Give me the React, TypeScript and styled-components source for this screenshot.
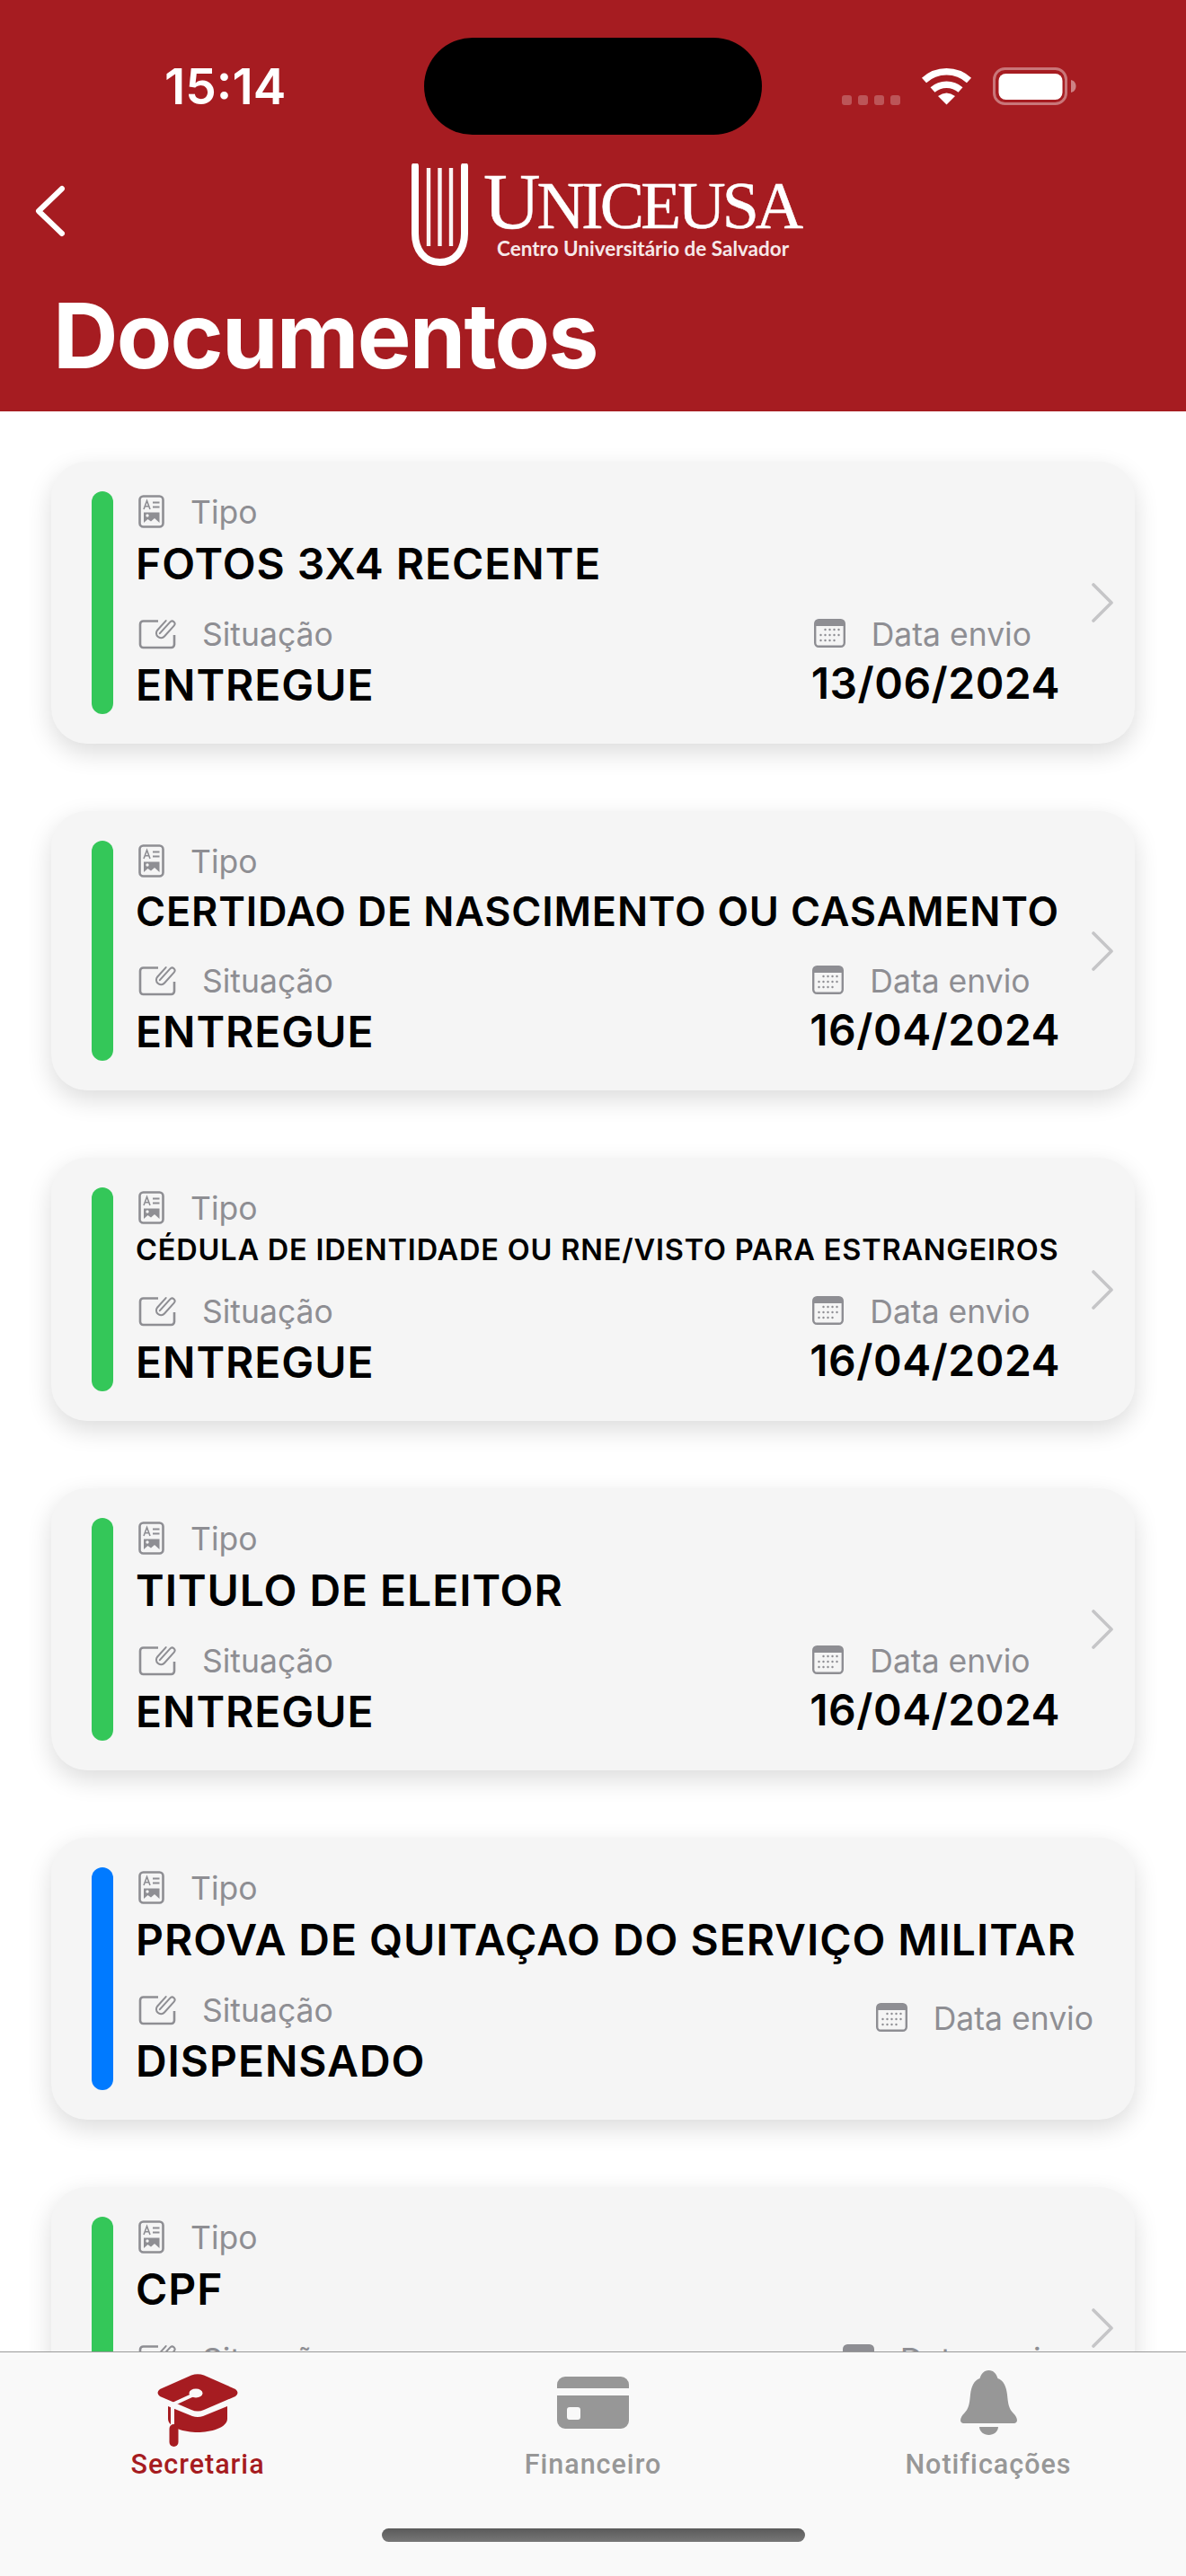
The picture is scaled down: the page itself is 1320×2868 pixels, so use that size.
import React from 'react';
import styled, { createGlobalStyle } from 'styled-components';

const RED = '#a61c21';
const GRAY = '#8e8e93';
const TAB_GRAY = '#979797';

type DocItem = {
  tipo: string;
  status: string;
  sent?: string;
  color: string;
  hasDetail: boolean;
  titleSize?: number;
  titleHeight?: number;
};

const DOCS: DocItem[] = [
  { tipo: 'FOTOS 3X4 RECENTE', status: 'ENTREGUE', sent: '13/06/2024', color: '#34c759', hasDetail: true },
  {
    tipo: 'CERTIDAO DE NASCIMENTO OU CASAMENTO',
    status: 'ENTREGUE',
    sent: '16/04/2024',
    color: '#34c759',
    hasDetail: true,
    titleSize: 45,
    titleHeight: 58,
  },
  {
    tipo: 'CÉDULA DE IDENTIDADE OU RNE/VISTO PARA ESTRANGEIROS',
    status: 'ENTREGUE',
    sent: '16/04/2024',
    color: '#34c759',
    hasDetail: true,
    titleSize: 32.5,
    titleHeight: 40,
  },
  { tipo: 'TITULO DE ELEITOR', status: 'ENTREGUE', sent: '16/04/2024', color: '#34c759', hasDetail: true },
  { tipo: 'PROVA DE QUITAÇAO DO SERVIÇO MILITAR', status: 'DISPENSADO', color: '#007aff', hasDetail: false },
  { tipo: 'CPF', status: 'ENTREGUE', color: '#34c759', hasDetail: true },
];

const DocIcon = () => (
  <svg width="29" height="37" viewBox="0 0 29 37" fill="none">
    <rect x="1.5" y="1.5" width="26" height="34" rx="4" stroke={GRAY} strokeWidth="2.6" />
    <path d="M6 16 L9.5 6.5 L13 16 M7.2 12.8 H11.8" stroke={GRAY} strokeWidth="1.6" />
    <path d="M16 8.5 H23.5 M16 13.5 H23.5" stroke={GRAY} strokeWidth="1.8" />
    <path d="M6 19.5 H23.5 V31 L18 26 L14 29.5 L10.5 27 L6 31 Z" fill={GRAY} />
    <circle cx="10" cy="23" r="1.7" fill="#f5f5f5" />
  </svg>
);

const ClipIcon = () => (
  <svg width="42" height="36" viewBox="0 0 42 36" fill="none">
    <path
      d="M22 4.5 H5.5 A3.5 3.5 0 0 0 2 8 V30.5 A3.5 3.5 0 0 0 5.5 34 H36.5 A3.5 3.5 0 0 0 40 30.5 V20"
      stroke={GRAY}
      strokeWidth="2.6"
    />
    <g transform="translate(31 12.5) rotate(42)">
      <path
        d="M-1.5 9 V-8 A3 3 0 0 1 4.5 -8 V8 A5.2 5.2 0 0 1 -5.9 8 V-6"
        stroke={GRAY}
        strokeWidth="2"
        strokeLinecap="round"
      />
    </g>
  </svg>
);

const CalendarIcon = () => (
  <svg width="35" height="32" viewBox="0 0 35 32" fill="none">
    <rect x="1.2" y="1.2" width="32.6" height="29.6" rx="4" stroke={GRAY} strokeWidth="2.4" />
    <path d="M1 8 V5 A4 4 0 0 1 5 1 H30 A4 4 0 0 1 34 5 V8 Z" fill={GRAY} />
    {[12, 18, 24].map(y =>
      [7.5, 12.5, 17.5, 22.5, 27.5].map(x =>
        (y === 12 && x < 12) || (y === 24 && x > 25) ? null : (
          <circle key={`${x}-${y}`} cx={x} cy={y} r="1.2" fill={GRAY} />
        ),
      ),
    )}
  </svg>
);

const ChevronIcon = () => (
  <svg width="24" height="44" viewBox="0 0 24 44" fill="none">
    <path d="M2 2 L22 22 L2 42" stroke="#c5c5c7" strokeWidth="3.6" strokeLinecap="round" strokeLinejoin="round" />
  </svg>
);

const BackIcon = () => (
  <svg width="35" height="58" viewBox="0 0 35 58" fill="none">
    <path d="M31 4 L5 29 L31 54" stroke="#fff" strokeWidth="6" strokeLinecap="round" strokeLinejoin="round" />
  </svg>
);

const LogoMark = () => (
  <svg width="63" height="114" viewBox="0 0 63 114" fill="none">
    <path d="M4 3 V78 C4 96 14 110 31.5 110 C49 110 59 96 59 78 V3" stroke="#fff" strokeWidth="8" strokeLinecap="round" />
    <path d="M19 5 V92 M31.5 5 V92 M44 5 V92" stroke="#fff" strokeWidth="4.4" opacity="0.95" />
  </svg>
);

const WifiIcon = () => (
  <svg width="57" height="42" viewBox="0 0 57 42" fill="none">
    <path d="M3.5 14.5 A37 37 0 0 1 53.5 14.5" stroke="#fff" strokeWidth="7.5" />
    <path d="M13 25 A23.5 23.5 0 0 1 44 25" stroke="#fff" strokeWidth="7.5" />
    <path d="M28.5 41.5 L19 32 Q28.5 25 38 32 Z" fill="#fff" />
  </svg>
);

const BatteryIcon = () => (
  <svg width="93" height="42" viewBox="0 0 93 42" fill="none">
    <rect x="1.5" y="1.5" width="80" height="39" rx="12" stroke="#fff" strokeOpacity="0.4" strokeWidth="3" />
    <rect x="6.5" y="7" width="71" height="29" rx="8" fill="#fff" />
    <path d="M87 14 C91 15 92.5 18 92.5 21 C92.5 24 91 27 87 28 Z" fill="#fff" fillOpacity="0.45" />
  </svg>
);

const CapIcon = ({ color }: { color: string }) => (
  <svg width="92" height="81" viewBox="0 0 92 81" fill="none">
    <path d="M39 1.5 Q46 -1 53 1.5 L88 17 Q93 21 88 25 L53 40 Q46 43 39 40 L4 25 Q-1 21 4 17 Z" fill={color} />
    <path d="M13 36 L40 47 Q46 49 52 47 L79 36 V50 C79 60 60 65 46 65 C32 65 13 60 13 50 Z" fill={color} />
    <path d="M44 22 L18 34 V58" stroke="#f9f9f9" strokeWidth="4" />
    <ellipse cx="44" cy="21.5" rx="7.5" ry="5" fill="#f9f9f9" />
    <rect x="14.5" y="56" width="10" height="25" rx="5" fill={color} />
  </svg>
);

const CardTabIcon = ({ color }: { color: string }) => (
  <svg width="80" height="58" viewBox="0 0 80 58" fill="none">
    <path d="M0 13 V9 A9 9 0 0 1 9 0 H71 A9 9 0 0 1 80 9 V13 Z" fill={color} />
    <path
      fillRule="evenodd"
      clipRule="evenodd"
      d="M0 21 H80 V49 A9 9 0 0 1 71 58 H9 A9 9 0 0 1 0 49 Z M14 34 A3 3 0 0 0 11 37 V45 A3 3 0 0 0 14 48 H23 A3 3 0 0 0 26 45 V37 A3 3 0 0 0 23 34 Z"
      fill={color}
    />
  </svg>
);

const BellIcon = ({ color }: { color: string }) => (
  <svg width="65" height="72" viewBox="0 0 65 72" fill="none">
    <path
      d="M32.5 0 C38 0 41 4 42.5 9 C49 11 52 18 53 27 C54 38 55 43 60 48 C64 52 66 58 61 59 H4 C-1 58 1 52 5 48 C10 43 11 38 12 27 C13 18 16 11 22.5 9 C24 4 27 0 32.5 0 Z"
      fill={color}
    />
    <path d="M22 63 H43 C43 68 38 72 32.5 72 C27 72 22 68 22 63 Z" fill={color} />
  </svg>
);

const TABS = [
  { label: 'Secretaria', Icon: CapIcon, active: true },
  { label: 'Financeiro', Icon: CardTabIcon, active: false },
  { label: 'Notificações', Icon: BellIcon, active: false },
];

const App = () => (
  <>
    <GlobalStyle />
    <Screen>
      <Header>
        <StatusBar>
          <Clock>15:14</Clock>
          <Island />
          <StatusIcons>
            <SignalDots>
              <SignalDot />
              <SignalDot />
              <SignalDot />
              <SignalDot />
            </SignalDots>
            <WifiIcon />
            <BatteryIcon />
          </StatusIcons>
        </StatusBar>
        <NavRow>
          <BackSlot>
            <BackIcon />
          </BackSlot>
          <Logo>
            <LogoMark />
            <Wordmark>
              <LogoName>
                <LogoInitial>U</LogoInitial>NICEUSA
              </LogoName>
              <LogoTagline>Centro Universitário de Salvador</LogoTagline>
            </Wordmark>
          </Logo>
        </NavRow>
        <PageTitle>Documentos</PageTitle>
      </Header>

      <List>
        {DOCS.map(doc => (
          <Card key={doc.tipo} $hasDetail={doc.hasDetail}>
            <StatusLine $color={doc.color} />
            <Content>
              <LabelRow>
                <DocIcon />
                <Label>Tipo</Label>
              </LabelRow>
              <DocTitle $size={doc.titleSize} $height={doc.titleHeight}>
                {doc.tipo}
              </DocTitle>
              <MetaRow>
                <MetaColumn>
                  <LabelRow>
                    <ClipIcon />
                    <Label>Situação</Label>
                  </LabelRow>
                  <StatusValue>{doc.status}</StatusValue>
                </MetaColumn>
                <MetaColumn $lowered={!doc.hasDetail}>
                  <LabelRow>
                    <CalendarIcon />
                    <Label>Data envio</Label>
                  </LabelRow>
                  {doc.sent && <DateValue>{doc.sent}</DateValue>}
                </MetaColumn>
              </MetaRow>
            </Content>
            {doc.hasDetail && (
              <ChevronWrap>
                <ChevronIcon />
              </ChevronWrap>
            )}
          </Card>
        ))}
      </List>

      <TabBar>
        <Tabs>
          {TABS.map(({ label, Icon, active }) => (
            <Tab key={label}>
              <TabIconSlot $raised={!active}>
                <Icon color={active ? RED : TAB_GRAY} />
              </TabIconSlot>
              <TabLabel $active={active}>{label}</TabLabel>
            </Tab>
          ))}
        </Tabs>
        <HomeIndicator />
      </TabBar>
    </Screen>
  </>
);

export default App;

const GlobalStyle = createGlobalStyle`
  body {
    margin: 0;
    background: #fff;
    font-family: Inter, "Liberation Sans", sans-serif;
    -webkit-font-smoothing: antialiased;
  }
`;

const Screen = styled.div`
  width: 1320px;
  height: 2868px;
  display: flex;
  flex-direction: column;
  overflow: hidden;
  background: #fff;
`;

const Header = styled.header`
  flex: none;
  height: 458px;
  padding-top: 42px;
  box-sizing: border-box;
  background: ${RED};
  color: #fff;
`;

const StatusBar = styled.div`
  display: flex;
  align-items: center;
  height: 108px;
  padding-left: 183px;
`;

const Clock = styled.div`
  width: 289px;
  font-size: 55px;
  font-weight: 600;
`;

const Island = styled.div`
  width: 376px;
  height: 108px;
  border-radius: 54px;
  background: #000;
`;

const StatusIcons = styled.div`
  display: flex;
  align-items: flex-end;
  margin-left: 89px;
  gap: 23px;
  height: 42px;
`;

const SignalDots = styled.div`
  display: flex;
  gap: 7px;
`;

const SignalDot = styled.div`
  width: 11px;
  height: 11px;
  border-radius: 3px;
  background: rgba(255, 255, 255, 0.25);
`;

const NavRow = styled.div`
  display: flex;
  align-items: flex-start;
  gap: 385px;
  margin-top: 32px;
  padding-left: 38px;
`;

const BackSlot = styled.div`
  display: flex;
  padding-top: 24px;
`;

const Logo = styled.div`
  display: flex;
  gap: 17px;
  height: 114px;
`;

const Wordmark = styled.div`
  display: flex;
  flex-direction: column;
  padding-top: 9px;
`;

const LogoName = styled.div`
  font-family: 'Liberation Serif', serif;
  font-size: 74px;
  line-height: 68px;
  letter-spacing: -4px;
  -webkit-text-stroke: 0.4px #fff;
  white-space: nowrap;
`;

const LogoInitial = styled.span`
  font-size: 88px;
`;

const LogoTagline = styled.div`
  margin: 1px 0 0 15px;
  font-family: Lato, sans-serif;
  font-size: 22.5px;
  line-height: 26px;
  font-weight: 700;
  opacity: 0.9;
  white-space: nowrap;
`;

const PageTitle = styled.h1`
  margin: 18px 0 0 59px;
  font-size: 100.5px;
  line-height: 120px;
  font-weight: 700;
  letter-spacing: -1.8px;
`;

const List = styled.main`
  flex: 1;
  min-height: 0;
  overflow: hidden;
  display: flex;
  flex-direction: column;
  gap: 75px;
  padding: 56px 57px 0;
`;

const Card = styled.section<{ $hasDetail: boolean }>`
  flex: none;
  display: flex;
  padding: 33px ${p => (p.$hasDetail ? 24 : 46)}px 33px 45px;
  border-radius: 40px;
  background: #f5f5f5;
  box-shadow: 0 10px 28px rgba(0, 0, 0, 0.14);
`;

const StatusLine = styled.div<{ $color: string }>`
  flex: none;
  width: 24px;
  border-radius: 12px;
  background: ${p => p.$color};
`;

const Content = styled.div`
  flex: 1;
  min-width: 0;
  padding-left: 25px;
`;

const LabelRow = styled.div`
  display: flex;
  align-items: center;
  gap: 29px;
  height: 44px;
  padding-left: 3px;
`;

const Label = styled.span`
  margin-top: 2px;
  font-size: 35.5px;
  color: ${GRAY};
  white-space: nowrap;
`;

const DocTitle = styled.div<{ $size?: number; $height?: number }>`
  margin-top: 6px;
  font-size: ${p => p.$size ?? 48}px;
  line-height: ${p => p.$height ?? 61}px;
  font-weight: 600;
  letter-spacing: ${p => (p.$size ? 0.8 : 0.95)}px;
  color: #000;
  white-space: nowrap;
`;

const MetaRow = styled.div`
  display: flex;
  justify-content: space-between;
  margin-top: 25px;
`;

const MetaColumn = styled.div<{ $lowered?: boolean }>`
  display: flex;
  flex-direction: column;
  margin-top: ${p => (p.$lowered ? 9 : 0)}px;
`;

const StatusValue = styled.div`
  margin-top: 4px;
  font-size: 48px;
  line-height: 64px;
  font-weight: 600;
  letter-spacing: 0.95px;
  color: #000;
`;

const DateValue = styled.div`
  margin-top: 2px;
  font-size: 48px;
  line-height: 64px;
  font-weight: 600;
  letter-spacing: 0.5px;
  color: #000;
`;

const ChevronWrap = styled.div`
  flex: none;
  display: flex;
  align-items: center;
  margin-left: 35px;
`;

const TabBar = styled.nav`
  flex: none;
  height: 250px;
  box-sizing: border-box;
  display: flex;
  flex-direction: column;
  border-top: 1px solid #9a9a9a;
  background: #f9f9f9;
`;

const Tabs = styled.div`
  display: grid;
  grid-template-columns: repeat(3, 1fr);
  padding-top: 21px;
`;

const Tab = styled.div`
  display: flex;
  flex-direction: column;
  align-items: center;
`;

const TabIconSlot = styled.div<{ $raised: boolean }>`
  display: flex;
  align-items: center;
  justify-content: center;
  box-sizing: border-box;
  height: 86px;
  padding-bottom: ${p => (p.$raised ? 16 : 0)}px;
`;

const TabLabel = styled.span<{ $active: boolean }>`
  font-family: Roboto, sans-serif;
  font-size: 30.5px;
  line-height: 36px;
  font-weight: 500;
  letter-spacing: 1px;
  color: ${p => (p.$active ? RED : TAB_GRAY)};
`;

const HomeIndicator = styled.div`
  width: 471px;
  height: 15px;
  margin: 53px auto 0;
  border-radius: 8px;
  background: linear-gradient(#5a5a5a, #777);
`;
